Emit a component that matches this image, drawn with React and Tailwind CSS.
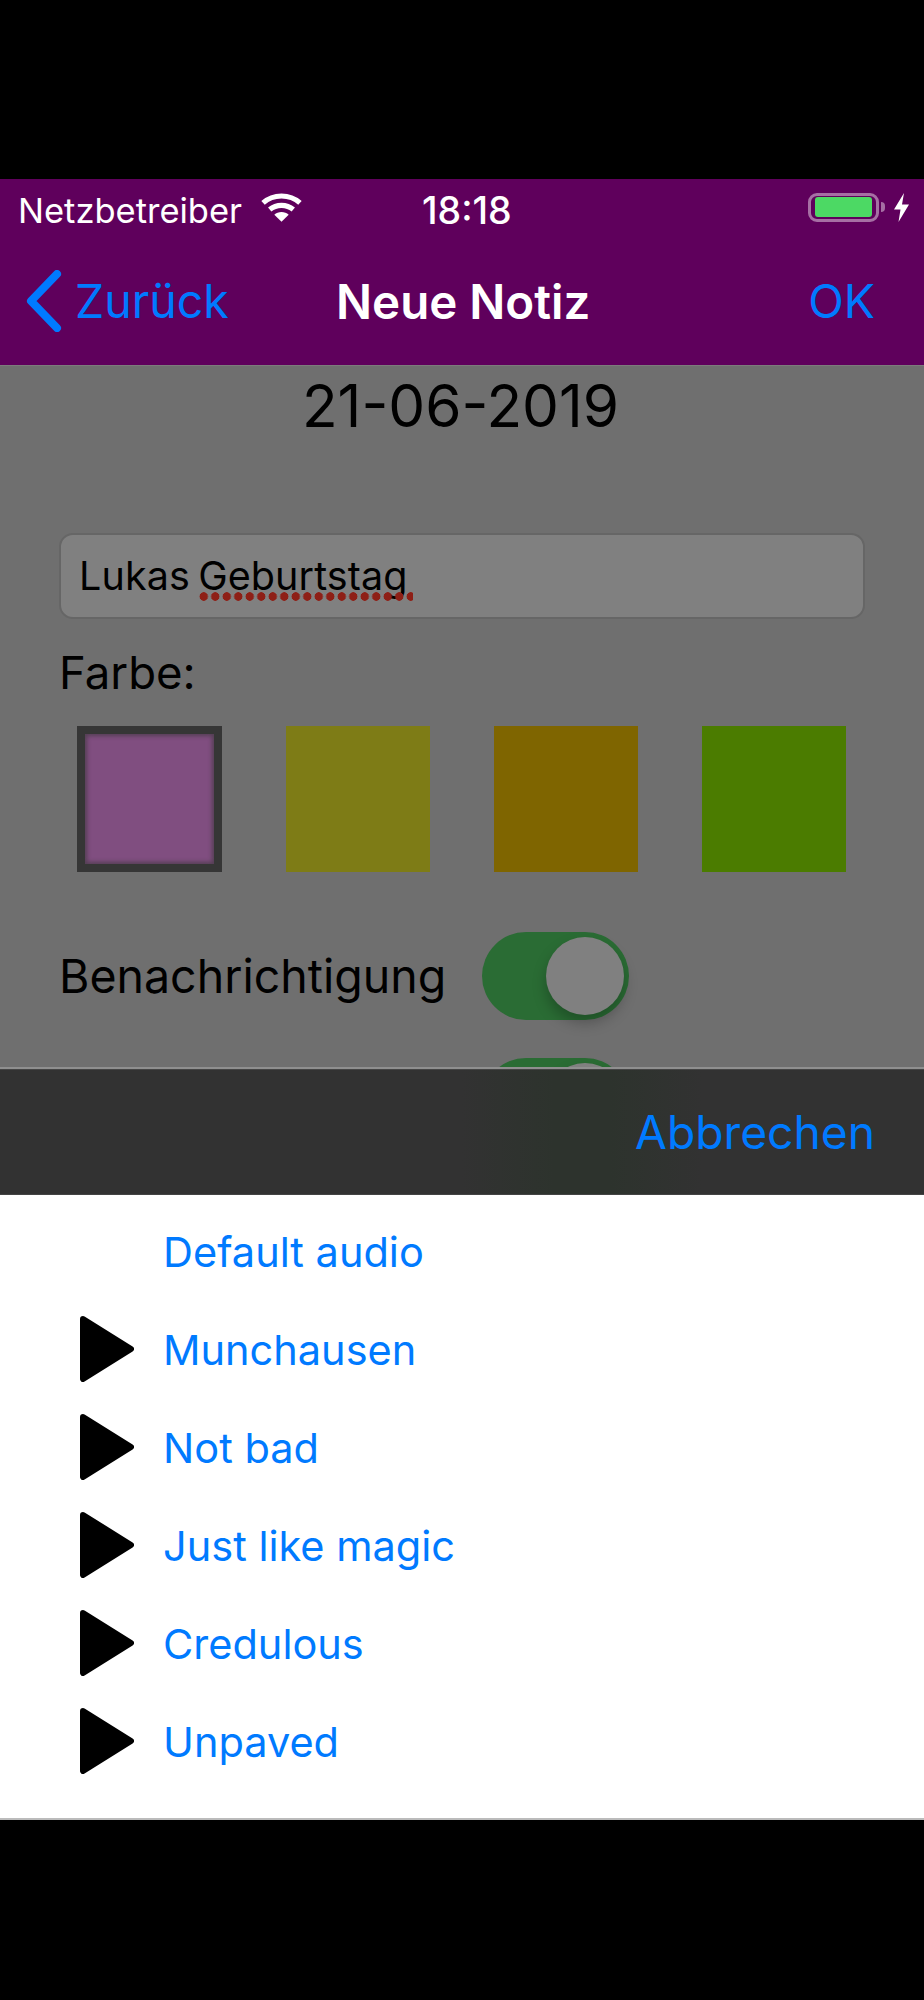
import React from 'react';

const sounds = [
  { name: 'Default audio', playable: false },
  { name: 'Munchausen', playable: true },
  { name: 'Not bad', playable: true },
  { name: 'Just like magic', playable: true },
  { name: 'Credulous', playable: true },
  { name: 'Unpaved', playable: true },
];

const swatches = ['bg-[#7e7c16]', 'bg-[#7f6500]', 'bg-[#4b7c00]'];

const WifiIcon = () => (
  <svg width="41" height="29" viewBox="0 0 40 28" fill="none" className="mt-[2px] shrink-0">
    <path d="M2 9.5C12 0.5 28 0.5 38 9.5" stroke="white" strokeWidth="5" />
    <path d="M8.5 16C15 10.5 25 10.5 31.5 16" stroke="white" strokeWidth="5" />
    <path d="M13 21C16.5 17.4 23.5 17.4 27 21L20 28Z" fill="white" />
  </svg>
);

const Battery = () => (
  <div className="mt-[2px] flex items-center">
    <div className="flex h-[29px] w-[71px] items-center justify-center rounded-[9px] border-[3px] border-[#a66fa4]">
      <div className="h-[20px] w-[57px] rounded-[3px] bg-[#4cd964]" />
    </div>
    <div className="ml-[2px] h-[10px] w-[4px] rounded-r-full bg-[#a66fa4]" />
    <svg width="15" height="29" viewBox="0 0 15 29" className="ml-[9px]">
      <path d="M10 0L0 16.5H6.5L4.5 29L15 11.5H8Z" fill="white" />
    </svg>
  </div>
);

const Toggle = ({ className = '' }) => (
  <div className={`flex h-[88px] w-[147px] shrink-0 items-center justify-end rounded-full bg-[#2a6c34] pr-[5px] ${className}`}>
    <div className="h-[78px] w-[78px] rounded-full bg-[#808080] shadow-[0_8px_14px_rgba(0,0,0,0.25)]" />
  </div>
);

const PlayIcon = () => (
  <svg width="54" height="66" viewBox="0 0 54 66" className="shrink-0">
    <path d="M3 3L51 33L3 63Z" fill="black" stroke="black" strokeWidth="6" strokeLinejoin="round" />
  </svg>
);

export default function App() {
  return (
    <div className="flex h-[2000px] w-[924px] flex-col overflow-hidden bg-black font-['Inter',sans-serif]">
      <div className="h-[179px] shrink-0" />

      {/* Status bar + navigation */}
      <header className="h-[187px] shrink-0 border-b border-[#7c7c7c] bg-[#5f005c]">
        <div className="flex h-[52px] items-center pl-[18px] pr-[15px] pt-[2px] text-white">
          <div className="flex w-[404px] items-center gap-[19px]">
            <span className="pt-[10px] text-[34.5px] leading-none">Netzbetreiber</span>
            <WifiIcon />
          </div>
          <span className="pt-[10px] text-[37.5px] font-medium leading-none">18:18</span>
          <div className="flex-1" />
          <Battery />
        </div>
        <div className="flex h-[115px] items-center pl-[26px] pr-[49px] pt-[24px]">
          <svg width="36" height="62" viewBox="0 0 36 62" fill="none" className="shrink-0">
            <path d="M31 4L5 31L31 58" stroke="#007aff" strokeWidth="8" strokeLinecap="round" strokeLinejoin="round" />
          </svg>
          <span className="ml-[13px] w-[261px] pt-[2px] text-[46.5px] leading-none text-[#007aff]">Zurück</span>
          <span className="pt-[2px] text-[47.5px] font-semibold leading-none text-white">Neue Notiz</span>
          <div className="flex-1" />
          <span className="pt-[2px] text-[46.5px] leading-none text-[#007aff]">OK</span>
        </div>
      </header>

      {/* Note form, dimmed behind the sound picker */}
      <main className="h-[703px] shrink-0 overflow-hidden border-b-2 border-[#8f8f8f] bg-[#6f6f6f] pl-[59px] pr-[59px]">
        <p className="mt-[8px] pr-[3px] text-center text-[58.5px] leading-[64px] text-black">21-06-2019</p>

        <div className="mt-[95px] flex h-[86px] items-center rounded-[14px] border-2 border-[#666] bg-[#808080] pl-[18px] pr-[19px]">
          <span className="relative pt-[2px] text-[39.5px] leading-none tracking-[0.1px] text-black [word-spacing:-3px]">
            Lukas{' '}
            <span className="relative">
              Geburtstag
              <span className="absolute -bottom-[1px] left-0 right-[-5px] h-[9px] bg-[radial-gradient(circle,#8e1f16_4px,transparent_4.5px)] bg-[length:11.5px_9px] bg-repeat-x" />
            </span>
          </span>
        </div>

        <p className="mt-[28px] text-[45.5px] leading-[52px] text-black">Farbe:</p>

        <div className="mt-[27px] flex gap-[64px] pl-[18px]">
          <div className="h-[146px] w-[145px] border-[8px] border-[#363636] bg-[#804e80] shadow-[inset_0_0_4px_2px_rgba(54,54,54,0.6)]" />
          {swatches.map((color) => (
            <div key={color} className={`h-[146px] w-[144px] ${color}`} />
          ))}
        </div>

        <div className="mt-[60px] flex items-center">
          <span className="w-[423px] shrink-0 text-[46.5px] leading-none text-black">Benachrichtigung</span>
          <Toggle />
        </div>
        <Toggle className="ml-[423px] mt-[38px]" />
      </main>

      {/* Picker toolbar */}
      <div className="flex h-[126px] shrink-0 items-center justify-end border-y border-[#444] bg-[linear-gradient(90deg,#323232_50%,#2d332d_60%,#2d332d_66%,#323232_76%)] pr-[49px]">
        <span className="text-[46.2px] leading-none text-[#007aff]">Abbrechen</span>
      </div>

      {/* Sound list */}
      <ul className="h-[625px] shrink-0 border-b-2 border-[#bbb] bg-white pt-[8px]">
        {sounds.map((sound) => (
          <li key={sound.name} className="flex h-[98px] items-center pl-[80px]">
            <div className="w-[83px] shrink-0 pb-[2px]">{sound.playable && <PlayIcon />}</div>
            <span className="pt-[2px] text-[41.5px] leading-none text-[#007aff]">{sound.name}</span>
          </li>
        ))}
      </ul>
    </div>
  );
}
